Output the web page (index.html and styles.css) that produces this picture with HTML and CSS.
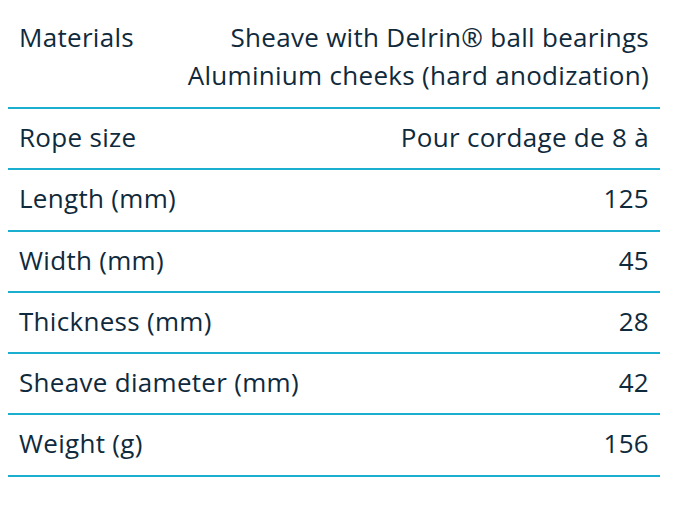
FILE: index.html
```html
<!DOCTYPE html>
<html>
<head>
<meta charset="utf-8">
<link rel="stylesheet" href="styles.css">
</head>
<body>
<div class="specs">
  <div class="row first">
    <div class="label">Materials</div>
    <div class="value">Sheave with Delrin® ball bearings<br>Aluminium cheeks (hard anodization)</div>
  </div>
  <div class="row">
    <div class="label">Rope size</div>
    <div class="value">Pour cordage de 8 à</div>
  </div>
  <div class="row">
    <div class="label">Length (mm)</div>
    <div class="value">125</div>
  </div>
  <div class="row">
    <div class="label">Width (mm)</div>
    <div class="value">45</div>
  </div>
  <div class="row">
    <div class="label">Thickness (mm)</div>
    <div class="value">28</div>
  </div>
  <div class="row">
    <div class="label">Sheave diameter (mm)</div>
    <div class="value">42</div>
  </div>
  <div class="row">
    <div class="label">Weight (g)</div>
    <div class="value">156</div>
  </div>
</div>
</body>
</html>
```
FILE: styles.css
```css
html, body {
  margin: 0;
  padding: 0;
  background: #ffffff;
}
body {
  padding-left: 8px;
  font-family: "Open Sans", "Noto Sans", "Liberation Sans", sans-serif;
  color: #0f2a3c;
}
.specs {
  width: 652px;
}
.row {
  display: flex;
  justify-content: space-between;
  align-items: flex-start;
  padding: 9px 11px 12.3px 11px;
  border-bottom: 2px solid #1aafcf;
  font-size: 26px;
  line-height: 38px;
  letter-spacing: 0.3px;
}
.row.first {
  padding-top: 18px;
  padding-bottom: 13px;
}
.value {
  text-align: right;
}
```
